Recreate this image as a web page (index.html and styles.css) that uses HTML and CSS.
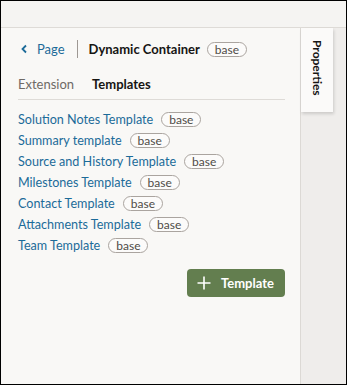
FILE: index.html
```html
<!DOCTYPE html>
<html lang="en">
<head>
  <meta charset="UTF-8" />
  <title>Dynamic Container</title>
  <link rel="stylesheet" href="styles.css">
</head>
<body>
  <div class="frame">
    <div class="topbar"></div>
    <div class="main">
      <div class="panel">
        <div class="crumbs">
          <a class="back">
            <svg width="8" height="10" viewBox="0 0 8 10"><path d="M6 1.5 L2.5 5 L6 8.5" fill="none" stroke="#1c6b99" stroke-width="1.8"/></svg>
            <span>Page</span>
          </a>
          <span class="sep"></span>
          <strong>Dynamic Container</strong>
          <span class="badge">base</span>
        </div>
        <div class="tabs">
          <span class="tab">Extension</span>
          <span class="tab active">Templates</span>
        </div>
        <ul class="list">
          <li><a>Solution Notes Template</a><span class="badge">base</span></li>
          <li><a>Summary template</a><span class="badge">base</span></li>
          <li><a>Source and History Template</a><span class="badge">base</span></li>
          <li><a>Milestones Template</a><span class="badge">base</span></li>
          <li><a>Contact Template</a><span class="badge">base</span></li>
          <li><a>Attachments Template</a><span class="badge">base</span></li>
          <li><a>Team Template</a><span class="badge">base</span></li>
        </ul>
        <div class="actions">
          <button class="add">
            <svg width="14" height="14" viewBox="0 0 14 14"><path d="M7 0.5 V13.5 M0.5 7 H13.5" stroke="#fff" stroke-width="1.6"/></svg>
            Template
          </button>
        </div>
      </div>
      <div class="side">
        <div class="proptab"><span>Properties</span></div>
      </div>
    </div>
  </div>
</body>
</html>
```

FILE: styles.css
```css
* {
  box-sizing: border-box;
}

body {
  margin: 0;
  font-family: Lato, "Noto Sans", sans-serif;
  font-size: 13px;
  color: #161513;
}

.frame {
  width: 347px;
  height: 385px;
  border: 1px solid #000;
  display: flex;
  flex-direction: column;
  background: #f9f8f6;
}

.topbar {
  height: 27px;
  background: #f5f4f2;
  border-bottom: 1px solid #dedbd7;
  flex: none;
}

.main {
  flex: 1;
  display: flex;
}

.panel {
  width: 300px;
  padding: 11px 15px 0 17px;
  border-right: 1px solid #dcd9d5;
}

.crumbs {
  display: flex;
  align-items: center;
  height: 20px;
  white-space: nowrap;
}

.back {
  display: flex;
  align-items: center;
  gap: 9px;
  color: #1c6b99;
  padding-left: 2px;
}

.sep {
  width: 1px;
  height: 18px;
  background: #9e9893;
  margin: 0 11px 0 12px;
}

.crumbs strong {
  font-weight: 700;
}

.badge {
  display: inline-block;
  border: 1px solid #aaa49f;
  border-radius: 8px;
  font-size: 12px;
  line-height: 13px;
  height: 15px;
  padding: 0 7px;
  color: #4f4b47;
  background: #fcfbfa;
  margin-left: 7px;
}

.list .badge {
  margin-left: 6px;
}

.tabs {
  display: flex;
  gap: 18px;
  margin-top: 17px;
  padding-bottom: 7px;
  border-bottom: 1px solid #dedbd7;
}

.tab {
  color: #6f6a66;
}

.tab.active {
  color: #161513;
  font-weight: 700;
}

.list {
  list-style: none;
  margin: 9px 0 0;
  padding: 0;
}

.list li {
  display: flex;
  align-items: center;
  height: 21px;
  white-space: nowrap;
}

.list a {
  color: #1c6b99;
  font-size: 12.6px;
  margin-right: 2px;
}

.actions {
  display: flex;
  justify-content: flex-end;
  margin-top: 13px;
}

.add {
  display: flex;
  align-items: center;
  gap: 10px;
  height: 28px;
  width: 98px;
  padding: 0 10px;
  background: #637e4f;
  border: none;
  border-radius: 4px;
  color: #fff;
  font-family: inherit;
  font-size: 13px;
  font-weight: 700;
}

.add svg {
  flex: none;
}

.side {
  flex: 1;
  background: #efedeb;
}

.proptab {
  width: 32px;
  height: 84px;
  background: #fbfaf9;
  box-shadow: 1px 2px 3px rgba(0, 0, 0, 0.15);
  display: flex;
  justify-content: center;
  padding-top: 12px;
}

.proptab span {
  writing-mode: vertical-rl;
  font-size: 12px;
  font-weight: 700;
  color: #161513;
}
```
